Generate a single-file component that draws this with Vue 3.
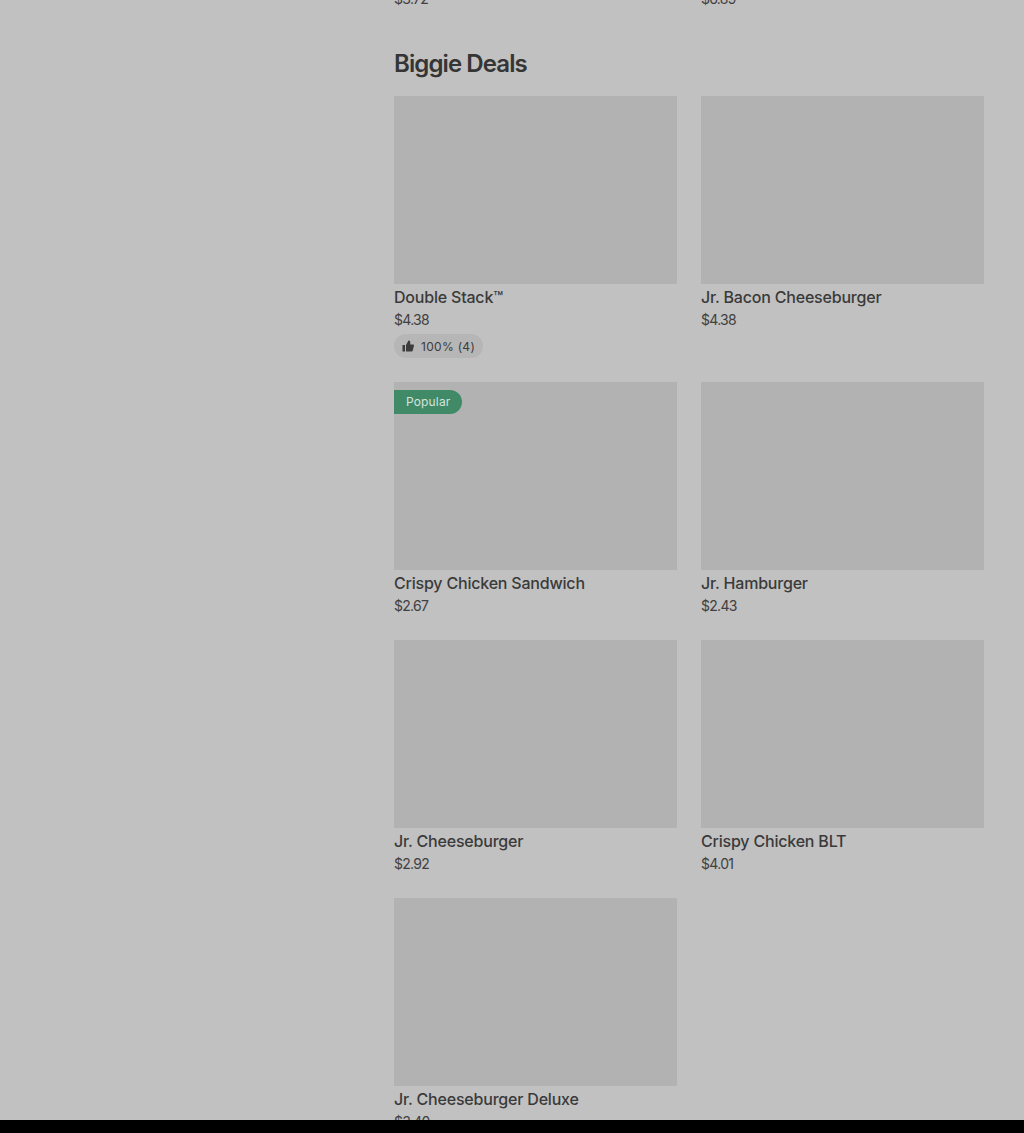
<template>
  <div class="page">
    <main class="menu">
      <div class="menu-grid prev-row">
        <div class="price">$3.72</div>
        <div class="price">$6.89</div>
      </div>

      <h2 class="section-title">Biggie Deals</h2>

      <div class="menu-grid">
        <div v-for="item in items" :key="item.name" class="menu-item">
          <div class="thumb">
            <span v-if="item.popular" class="popular">Popular</span>
          </div>
          <div class="name">{{ item.name }}</div>
          <div class="price">{{ item.price }}</div>
          <div v-if="item.rating" class="rating">
            <svg class="thumb-icon" viewBox="0 0 24 24" width="12" height="12">
              <path d="M1 10h5v13H1zM8 23V10l5-9c2 0 3.500 1.300 3.500 3.300V9H22c1.300 0 2.200 1.200 1.900 2.500l-2.400 9.700c-.3 1.100-1.200 1.800-2.300 1.800z" fill="currentColor" />
            </svg>
            {{ item.rating }}
          </div>
        </div>
      </div>
    </main>
    <div class="bottom-bar"></div>
  </div>
</template>

<script setup>
const items = [
  { name: 'Double Stack™', price: '$4.38', rating: '100% (4)' },
  { name: 'Jr. Bacon Cheeseburger', price: '$4.38' },
  { name: 'Crispy Chicken Sandwich', price: '$2.67', popular: true },
  { name: 'Jr. Hamburger', price: '$2.43' },
  { name: 'Jr. Cheeseburger', price: '$2.92' },
  { name: 'Crispy Chicken BLT', price: '$4.01' },
  { name: 'Jr. Cheeseburger Deluxe', price: '$3.40' }
];
</script>

<style>
html,
body {
  margin: 0;
  overflow: hidden;
}
</style>

<style scoped>
.page {
  display: flex;
  flex-direction: column;
  height: 1133px;
  background: #c1c1c1;
  font-family: Inter, Roboto, sans-serif;
  color: #333;
}

.menu {
  flex: 1;
  min-height: 0;
  overflow: hidden;
  padding: 0 40px 0 394px;
}

.menu-grid {
  display: grid;
  grid-template-columns: 283px 283px;
  column-gap: 24px;
  align-items: start;
}

.prev-row {
  margin-top: -11px;
}

.section-title {
  margin: 39px 0 16px;
  font-size: 24px;
  line-height: 32px;
  font-weight: 600;
  letter-spacing: -0.9px;
  color: #353535;
}

.menu-item {
  margin-bottom: 24px;
}

.thumb {
  position: relative;
  height: 188px;
  background: #b2b2b2;
}

.popular {
  position: absolute;
  top: 8px;
  left: 0;
  height: 24px;
  padding: 0 12px;
  border-radius: 0 12px 12px 0;
  background: #418a68;
  color: #d5e4dc;
  font-size: 12px;
  line-height: 24px;
  letter-spacing: 0.15px;
}

.name {
  font-size: 16px;
  line-height: 26px;
  font-weight: 500;
  letter-spacing: -0.2px;
  color: #3a3a3a;
}

.price {
  font-size: 14px;
  line-height: 20px;
  letter-spacing: -0.7px;
  color: #404040;
}

.rating {
  display: inline-flex;
  align-items: center;
  gap: 7px;
  height: 24px;
  margin-top: 4px;
  padding: 0 8px;
  border-radius: 12px;
  background: #b6b6b6;
  font-size: 12px;
  letter-spacing: 0.3px;
  color: #3c3c3c;
}

.thumb-icon {
  flex: none;
}

.bottom-bar {
  flex: none;
  height: 13px;
  background: #000;
}
</style>
